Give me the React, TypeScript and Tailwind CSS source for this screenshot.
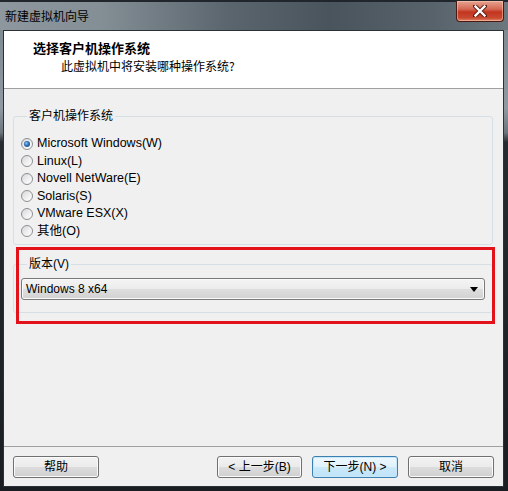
import React from "react";

const FONT = "font-['Liberation_Sans','Noto_Sans_CJK_SC',sans-serif]";
const CJK = "font-['Noto_Sans_CJK_SC','Liberation_Sans',sans-serif]";

function Radio({ checked, label }: { checked?: boolean; label: string }) {
  return (
    <div className="flex h-[17.5px] items-center">
      <div className="flex h-[12px] w-[12px] items-center justify-center rounded-full border border-[#8c8f92] bg-[linear-gradient(135deg,#d4d6d8_0%,#f2f2f2_60%,#ffffff_100%)]">
        {checked && (
          <div className="h-[6px] w-[6px] rounded-full bg-[radial-gradient(circle_at_40%_40%,#8ec4ee_0%,#2d6db5_45%,#0f3a73_100%)]" />
        )}
      </div>
      <span className="ml-[4px] text-[12.5px] leading-[17px] text-black">{label}</span>
    </div>
  );
}

function Btn({ children, primary, w = "w-[86px]" }: { children: React.ReactNode; primary?: boolean; w?: string }) {
  return (
    <div
      className={
        "flex h-[22px] items-center justify-center rounded-[3px] border text-[12px] leading-[14px] text-black " +
        w +
        " " +
        (primary
          ? "border-[#3c7fb1] bg-[linear-gradient(to_bottom,#eef8fe_0%,#e0f2fc_50%,#cbe9fb_50%,#bfe3f8_100%)] shadow-[inset_0_0_0_1px_#c8e8fa]"
          : "border-[#707070] bg-[linear-gradient(to_bottom,#f2f2f2_0%,#ebebeb_50%,#dddddd_50%,#cfcfcf_100%)] shadow-[inset_0_0_0_1px_#fbfbfb]")
      }
    >
      {children}
    </div>
  );
}

export default function App() {
  return (
    <div
      className={
        "flex h-[491px] w-[508px] flex-col bg-[linear-gradient(to_bottom,#7a858c_0%,#8f999f_22%,#6c757c_27%,#252b30_29%,#1a1e22_100%)] " +
        FONT
      }
    >
      {/* Title bar */}
      <div className="flex h-[30px] shrink-0 items-start justify-between border-t-[2px] border-[#20262b] bg-[linear-gradient(to_right,#8d979d_0%,#848e95_20%,#5b656d_45%,#4a545c_65%,#58626a_85%,#6d777e_100%)]">
        <div className={"ml-[5px] mt-[6px] text-[12px] leading-[16px] text-black " + CJK}>新建虚拟机向导</div>
        <div className="mr-[4px] mt-[-1px] flex h-[21px] w-[48px] items-center justify-center rounded-b-[4px] border border-t-0 border-[#4a1a12] bg-[linear-gradient(to_bottom,#e7a491_0%,#d46a55_40%,#c2351f_55%,#c94a30_85%,#e08a6c_100%)] shadow-[inset_0_0_0_1px_rgba(255,210,190,0.5)]">
          <svg width="14" height="12" viewBox="0 0 14 12">
            <path d="M2 1 L12 11 M12 1 L2 11" stroke="#5a1a10" strokeWidth="4.2" strokeLinecap="square" />
            <path d="M2.5 1.5 L11.5 10.5 M11.5 1.5 L2.5 10.5" stroke="#ffffff" strokeWidth="2.4" strokeLinecap="square" />
          </svg>
        </div>
      </div>

      {/* Client */}
      <div className="ml-[3px] mr-[4px] mb-[4px] flex flex-1 flex-col border border-[#2b3136] bg-[#f0f0f0]">
        {/* Header */}
        <div className="h-[58px] shrink-0 border-b border-[#a0a0a0] bg-white">
          <div className={"ml-[29px] mt-[8px] text-[13px] font-bold leading-[18px] text-black " + CJK}>选择客户机操作系统</div>
          <div className={"ml-[57px] mt-[1px] text-[12px] leading-[16px] text-black " + CJK}>此虚拟机中将安装哪种操作系统?</div>
        </div>

        {/* Body */}
        <div className="relative flex-1">
          <fieldset className="ml-[9px] mr-[10px] mt-[19px] rounded-[3px] border border-[#d5dfe5] pb-[4px] pl-[7px] pt-[11px]">
            <legend className="ml-[6px] px-[2px] text-[12px] leading-[16px] text-black">客户机操作系统</legend>
            <Radio checked label="Microsoft Windows(W)" />
            <Radio label="Linux(L)" />
            <Radio label="Novell NetWare(E)" />
            <Radio label="Solaris(S)" />
            <Radio label="VMware ESX(X)" />
            <Radio label="其他(O)" />
          </fieldset>

          <fieldset className="ml-[9px] mr-[10px] mt-[11px] rounded-[3px] border border-[#d5dfe5] pb-[12px] pl-[7px] pr-[7px] pt-[6px]">
            <legend className="ml-[6px] px-[2px] text-[12px] leading-[16px] text-black">版本(V)</legend>
            <div className="flex h-[22px] items-center justify-between rounded-[3px] border border-[#7a7a7a] bg-[linear-gradient(to_bottom,#f4f4f4_0%,#ececec_50%,#dedede_50%,#d2d2d2_100%)] pl-[4px] pr-[6px] shadow-[inset_0_0_0_1px_#fafafa]">
              <span className="text-[12px] leading-[14px] text-black">Windows 8 x64</span>
              <svg width="8" height="5" viewBox="0 0 8 5">
                <path d="M0 0 H8 L4 5 Z" fill="#000" />
              </svg>
            </div>
          </fieldset>

          <div className="pointer-events-none absolute left-[12px] top-[158px] h-[77px] w-[479px] border-[3px] border-[#e3121a]" />
        </div>

        {/* Footer */}
        <div className="flex h-[40px] shrink-0 items-start border-t border-[#a0a0a0] pl-[9px] pr-[9px] pt-[9px]">
          <Btn>帮助</Btn>
          <div className="flex-1" />
          <Btn w="w-[85px]">&lt; 上一步(B)</Btn>
          <div className="w-[10px]" />
          <Btn primary>下一步(N) &gt;</Btn>
          <div className="w-[10px]" />
          <Btn>取消</Btn>
        </div>
      </div>
    </div>
  );
}
